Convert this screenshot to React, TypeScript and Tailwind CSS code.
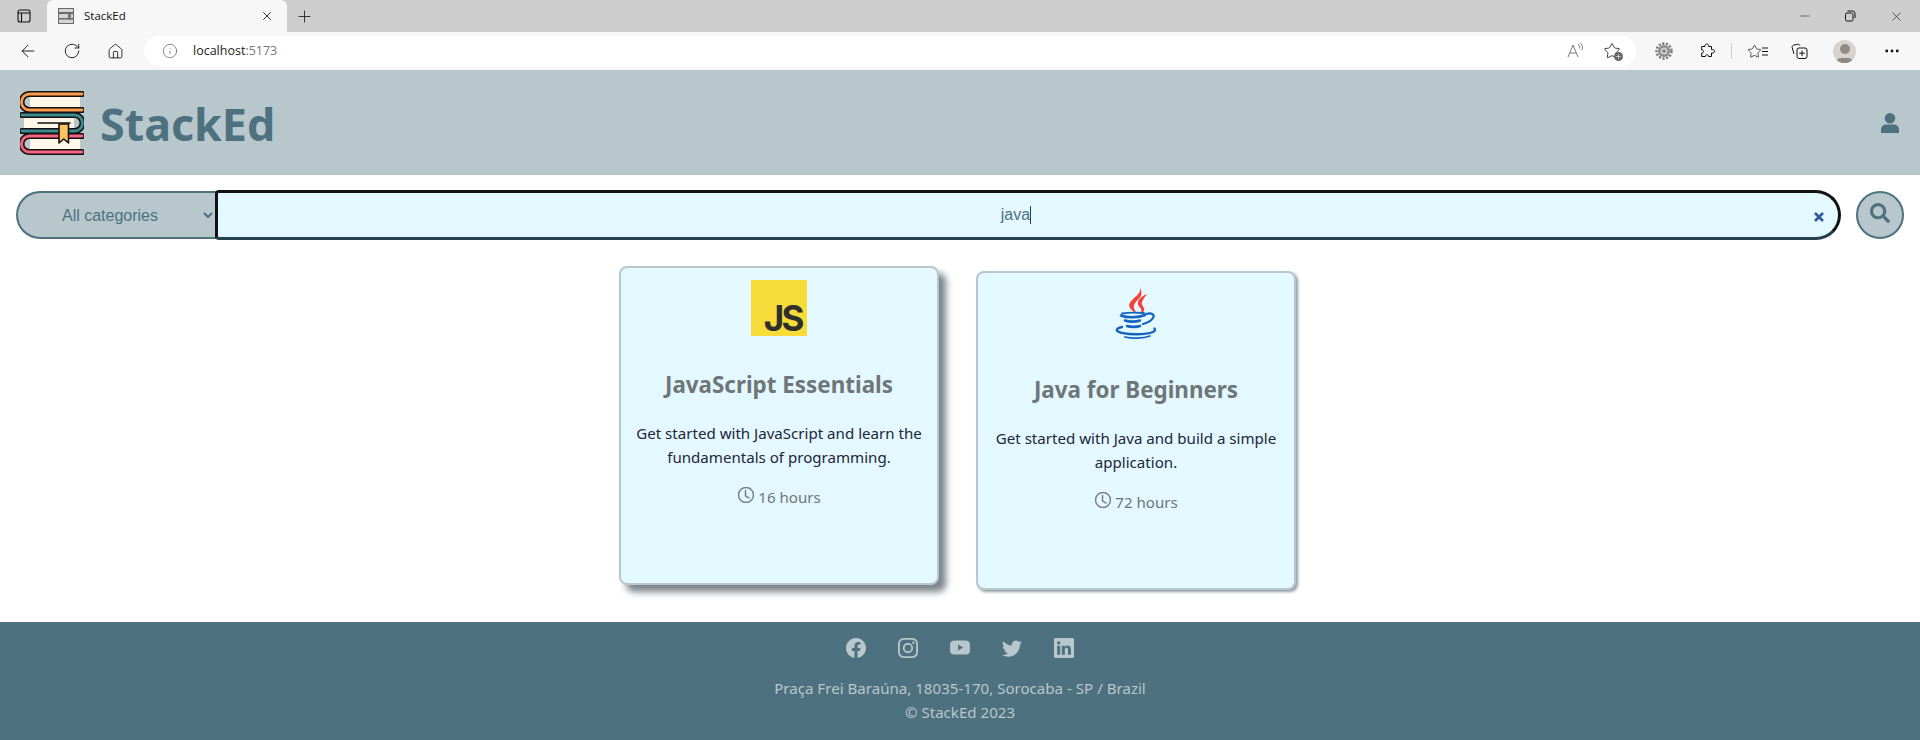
import React from 'react';
import { ArrowLeft, RotateCw, Home, Info, X, Plus, Minus, Star, MoreHorizontal } from 'lucide-react';
import { BsFacebook, BsInstagram, BsYoutube, BsTwitter, BsLinkedin, BsClock } from 'react-icons/bs';
import { FaSearch } from 'react-icons/fa';

const BooksLogo = () => (
  <svg width="64" height="64" viewBox="0 0 64 64" fill="none" strokeLinecap="round">
    {/* pages */}
    <path d="M10 4h50v14H10z" fill="#fff7e8" />
    <path d="M4 25h50v14H4z" fill="#fff7e8" />
    <path d="M10 47h50v14H10z" fill="#fff7e8" />
    {/* top book */}
    <path d="M62 3H9.500a7.500 7.500 0 0 0 0 16H62" stroke="#111" strokeWidth="6" />
    <path d="M62 3H9.500a7.500 7.500 0 0 0 0 16H62" stroke="#fb9a4c" strokeWidth="2.800" />
    {/* middle book */}
    <path d="M2 24h52.500a7.500 7.500 0 0 1 0 16H2" stroke="#111" strokeWidth="6" />
    <path d="M2 24h52.500a7.500 7.500 0 0 1 0 16H2" stroke="#3d8a90" strokeWidth="2.800" />
    {/* bottom book */}
    <path d="M62 45H9.500a7.500 7.500 0 0 0 0 16H62" stroke="#111" strokeWidth="6" />
    <path d="M62 45H9.500a7.500 7.500 0 0 0 0 16H62" stroke="#f9627e" strokeWidth="2.800" />
    <path d="M18 32h32" stroke="#111" strokeWidth="1.600" />
    {/* bookmark */}
    <path d="M39 33h9.500v19l-4.700-4-4.800 4z" fill="#fbc35e" stroke="#111" strokeWidth="1.600" strokeLinejoin="round" />
  </svg>
);

const JavaLogo = () => (
  <svg width="56" height="56" viewBox="0 0 56 56" fill="none" strokeLinecap="round">
    <path d="M32 1c2 6-3 9-7 13-3 3-5 6-3 9 1 2 4 4 7 6-1-3-4-5-3-9 1-3 5-6 7-9 1-3 0-7-1-10z" fill="#f44336" />
    <path d="M39 9c-3 1-8 4-9 8-1 3 2 5 3 7 1 2 0 4-1 5 3-1 5-3 4-6-1-2-3-4-2-6 1-3 3-5 5-8z" fill="#f44336" />
    <path d="M14 28.500c6-1 14-1 22-.5" stroke="#1565c0" strokeWidth="1.800" />
    <path d="M13 30.500c6 2.500 17 2.500 24-.5" stroke="#1565c0" strokeWidth="2.600" />
    <path d="M17 35.500c4 1.500 11 1.500 15 0" stroke="#1565c0" strokeWidth="2.600" />
    <path d="M19 41c3 1.200 10 1.200 13 0" stroke="#1565c0" strokeWidth="2.600" />
    <path d="M38 29c6-2 9 1 7 4-2 3-6 5-10 6" stroke="#1565c0" strokeWidth="2.200" />
    <path d="M14 42c-5 .8-6.500 3-4 4.500 6 3.500 28 3.500 35 .5 2-1 2.500-2.500 1.500-3.500" stroke="#1565c0" strokeWidth="2.400" />
    <path d="M17 52c7 1.800 18 1.500 25-1" stroke="#1565c0" strokeWidth="1.800" />
  </svg>
);

const Favicon = () => (
  <svg width="16" height="16" viewBox="0 0 16 16" fill="none">
    <rect x="0.500" y="0.500" width="15" height="4" fill="#d4d4d4" stroke="#6a6a6a" />
    <rect x="0.500" y="5.500" width="15" height="5" fill="#d4d4d4" stroke="#6a6a6a" />
    <rect x="0.500" y="11" width="15" height="4.500" fill="#d4d4d4" stroke="#6a6a6a" />
    <rect x="10" y="6" width="3" height="6" fill="#777" />
  </svg>
);

const GearExtension = () => (
  <svg width="18" height="18" viewBox="0 0 18 18" fill="none" className="ml-[19px]">
    <circle cx="9" cy="9" r="7.500" stroke="#777" strokeWidth="2.400" strokeDasharray="2.200 1.500" />
    <circle cx="9" cy="9" r="6" fill="#8a8a8a" />
    <circle cx="9" cy="9" r="3.500" fill="#cfcfcf" />
    <circle cx="9" cy="9" r="1.600" fill="#777" />
  </svg>
);

const UserIcon = () => (
  <svg width="18" height="20" viewBox="0 0 18 20" fill="#4d717f">
    <circle cx="9" cy="5.300" r="5.300" />
    <path d="M0 20v-3.500C0 13.500 2.500 11.500 5 11.500h8c2.500 0 5 2 5 5V20z" />
  </svg>
);

const AddressIcons = () => (
  <div className="flex items-center text-[#1c1c1c]">
    <svg width="18" height="18" viewBox="0 0 18 18" fill="none" stroke="#777" strokeWidth="1" className="mr-[19px]">
      <path d="M2 15 7 3l5 12M4 11h6M12 2c1.500 1 2 3 1.500 4.500M14.500 1c2 2 2.500 4.500 1.500 7" />
    </svg>
    <div className="relative w-[18px] h-[18px] mr-px">
      <Star size={18} strokeWidth={1.100} />
      <span className="absolute -right-[2px] -bottom-[1px] w-[9px] h-[9px] rounded-full bg-[#666] flex items-center justify-center">
        <Plus size={7} strokeWidth={2} color="#fff" />
      </span>
    </div>
  </div>
);

const Card = ({ logo, title, text, hours, lifted }: { logo: React.ReactNode; title: string; text: string; hours: string; lifted?: boolean }) => (
  <div
    className={
      lifted
        ? 'w-[320px] h-[319px] -translate-y-[5px] bg-[#e4f8ff] border-2 border-[#b8c7cc] rounded-lg flex flex-col items-center pt-3 px-3 shadow-[7px_7px_7px_rgba(77,90,100,0.75)]'
        : 'w-[320px] h-[319px] bg-[#e4f8ff] border-2 border-[#b8c7cc] rounded-lg flex flex-col items-center pt-3 px-3 shadow-[2px_2px_3px_rgba(77,90,100,0.6)]'
    }
  >
    <div className="w-14 h-14">{logo}</div>
    <h5 className="mt-[34px] text-[22.400px] leading-[29px] font-bold text-[#6f7679]">{title}</h5>
    <p className="mt-[22px] text-[15.100px] leading-6 text-[#21263a] text-center">{text}</p>
    <div className="mt-[16px] flex items-center text-[15.100px] leading-6 text-[#6f7679]">
      <BsClock size={16} stroke="currentColor" strokeWidth={0.4} className="ml-px mr-[4px] -mt-1" />
      {hours}
    </div>
  </div>
);

export default function App() {
  return (
    <div className="min-h-screen flex flex-col bg-white font-['Noto_Sans',sans-serif]">
      {/* Browser tab strip */}
      <div className="h-8 bg-[#cdcdcd] flex items-end shrink-0">
        <div className="w-[47px] h-8 flex items-center justify-center">
          <svg width="16" height="16" viewBox="0 0 16 16" fill="none" stroke="#111" strokeWidth="1.100">
            <rect x="2" y="2" width="12" height="12" rx="2" />
            <path d="M2 5h12M5.500 5v9" />
          </svg>
        </div>
        <div className="w-[240px] h-8 bg-[#f7f7f7] rounded-t-md flex items-center pl-[11px] pr-[13px]">
          <Favicon />
          <span className="ml-[10px] text-[11.500px] text-[#111] font-['Open_Sans',sans-serif] flex-1">StackEd</span>
          <X size={14} strokeWidth={1.500} color="#111" />
        </div>
        <div className="w-[34px] h-8 ml-[-1px] flex items-center justify-center">
          <Plus size={19} strokeWidth={1} color="#111" className="ml-[3px]" />
        </div>
        <div className="flex-1" />
        <div className="h-8 flex items-center text-[#111]">
          <Minus size={14} strokeWidth={1} className="mr-[32px]" />
          <svg width="12" height="12" viewBox="0 0 12 12" fill="none" stroke="#111" strokeWidth="1" className="mr-[33px]">
            <rect x="1.500" y="3" width="7.500" height="8" rx="1.500" />
            <path d="M3.500 1h5A2.500 2.500 0 0 1 11 3.500V8" />
          </svg>
          <X size={15} strokeWidth={1} className="mr-[16px]" />
        </div>
      </div>

      {/* Browser toolbar */}
      <div className="h-[38px] bg-[#f7f7f7] flex items-center shrink-0">
        <ArrowLeft size={20} strokeWidth={1.100} color="#111" className="ml-[18px]" />
        <RotateCw size={18} strokeWidth={1.200} color="#111" className="ml-[25px]" />
        <Home size={17} strokeWidth={1.200} color="#111" className="ml-[26px]" />
        <div className="ml-[20px] w-[1492px] h-[30px] bg-white rounded-full flex items-center pl-[18px] pr-[14px]">
          <Info size={16} strokeWidth={1} color="#555" />
          <span className="ml-[15px] text-[12.500px] text-[#222] font-['Open_Sans',sans-serif] flex-1">
            localhost<span className="text-[#767676]">:5173</span>
          </span>
          <AddressIcons />
        </div>
        <div className="flex items-center flex-1 text-[#111]">
          <GearExtension />
          <svg width="16" height="16" viewBox="0 0 16 16" fill="none" stroke="#111" strokeWidth="1" className="ml-[26px]">
            <path d="M6 2.500c0-2 3.500-2 3.500 0v1h3v3.200c2-.6 3 .6 3 1.600s-1 2.300-3 1.700v3.500H9.500c.5-2.300-3.500-2.300-3 0H2.700V10c2.300.5 2.300-3.500 0-3V3.500H6z" />
          </svg>
          <div className="ml-[16px] h-4 w-px bg-[#cfcfcf]" />
          <div className="ml-[15px] flex">
            <Star size={15} strokeWidth={1.100} />
            <svg width="6" height="10" viewBox="0 0 6 10" stroke="#111" strokeWidth="1" className="mt-[3px]"><path d="M0 1h6M0 4.500h6M0 8h6" /></svg>
          </div>
          <svg width="17" height="17" viewBox="0 0 17 17" fill="none" stroke="#111" strokeWidth="1" className="ml-[23px]">
            <rect x="6" y="5" width="10" height="10.500" rx="2" />
            <path d="M11 7.500v5.500M8.300 10.200h5.400M3 11 1.200 4.500c-.3-1 .3-2 1.300-2.300l4-.9c1-.2 2 .2 2.400 1.200" />
          </svg>
          <div className="ml-[25px] w-[23px] h-[23px] rounded-full bg-[#d5d2cf] relative overflow-hidden flex justify-center">
            <span className="mt-[4px] w-[10px] h-[10px] rounded-full bg-[#8f8a86]" />
            <span className="absolute bottom-[-5px] w-[17px] h-[10px] rounded-full bg-[#8f8a86]" />
          </div>
          <MoreHorizontal size={18} strokeWidth={1.800} className="ml-[27px]" />
        </div>
      </div>

      {/* Header */}
      <header className="h-[105px] bg-[#b8c7cc] flex items-center justify-between pl-5 pr-[21px] shrink-0">
        <div className="flex items-center">
          <BooksLogo />
          <span className="ml-[16px] text-[44.800px] leading-[58px] font-bold text-[#4d717f] mt-[2px]">StackEd</span>
        </div>
        <UserIcon />
      </header>

      {/* Search */}
      <div className="flex items-center pl-4 pr-4 mt-[15px] shrink-0">
        <select
          defaultValue="all"
          className="w-[200px] h-12 bg-[#b8c7cc] border-2 border-[#4d717f] border-r-0 rounded-l-full text-[#4d717f] text-[16px] text-center font-['Liberation_Sans',sans-serif] pr-[2px] outline-none"
        >
          <option value="all">All categories</option>
        </select>
        <div className="relative flex-1 h-[50px] -ml-px bg-[#e4f8ff] border-[3px] border-[#111] border-b-[#24414d] rounded-r-[25px] rounded-l-[4px] flex items-center justify-center pr-[24px] font-['Liberation_Sans',sans-serif] text-[16px] text-[#4d717f]">
          java<span className="inline-block w-px h-[18px] bg-[#24414d]" />
          <svg width="12" height="12" viewBox="0 0 12 12" className="absolute right-[13px] top-[18px]" stroke="#2f5b9e" strokeWidth="2.600">
            <path d="M2 2l8 8M10 2l-8 8" />
          </svg>
        </div>
        <div className="ml-[15px] w-12 h-12 rounded-full bg-[#b8c7cc] border-2 border-[#4d717f] flex items-center justify-center shrink-0">
          <FaSearch size={20} color="#4d717f" className="-mt-1" />
        </div>
      </div>

      {/* Course cards */}
      <main className="flex-1 flex justify-center gap-[37px] pt-[31px] pr-[5px]">
        <Card
          lifted
          logo={
            <div className="w-14 h-14 bg-[#f7dc3a] flex items-end justify-end pr-[5px] font-['Inter',sans-serif] font-bold text-[35px] leading-[36px] tracking-[-2.500px] text-[#2f302c]">
              JS
            </div>
          }
          title="JavaScript Essentials"
          text="Get started with JavaScript and learn the fundamentals of programming."
          hours="16 hours"
        />
        <Card
          logo={<JavaLogo />}
          title="Java for Beginners"
          text="Get started with Java and build a simple application."
          hours="72 hours"
        />
      </main>

      {/* Footer */}
      <footer className="h-[118px] bg-[#4d717f] flex flex-col items-center pt-[16px] shrink-0 text-[#b8c7cc]">
        <div className="flex gap-8">
          <BsFacebook size={20} />
          <BsInstagram size={20} />
          <BsYoutube size={20} />
          <BsTwitter size={20} />
          <BsLinkedin size={20} />
        </div>
        <p className="mt-[18px] text-[15.100px] leading-6">Praça Frei Baraúna, 18035-170, Sorocaba - SP / Brazil</p>
        <p className="text-[15.100px] leading-6">© StackEd 2023</p>
      </footer>
    </div>
  );
}
